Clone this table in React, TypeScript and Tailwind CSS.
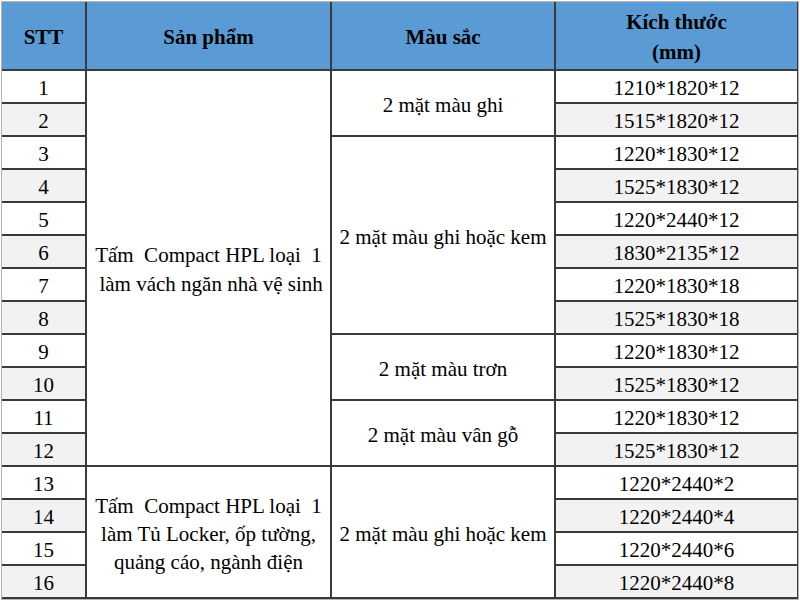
const sizes = [
  '1210*1820*12',
  '1515*1820*12',
  '1220*1830*12',
  '1525*1830*12',
  '1220*2440*12',
  '1830*2135*12',
  '1220*1830*18',
  '1525*1830*18',
  '1220*1830*12',
  '1525*1830*12',
  '1220*1830*12',
  '1525*1830*12',
  '1220*2440*2',
  '1220*2440*4',
  '1220*2440*6',
  '1220*2440*8',
];

// colour groups: [first row, span, label]
const colours: [number, number, string][] = [
  [1, 2, '2 mặt màu ghi'],
  [3, 6, '2 mặt màu ghi hoặc kem'],
  [9, 2, '2 mặt màu trơn'],
  [11, 2, '2 mặt màu vân gỗ'],
  [13, 4, '2 mặt màu ghi hoặc kem'],
];

export default function App() {
  return (
    <div className="w-[800px] h-[600px] bg-white pt-px pl-px font-['Liberation_Serif','Times_New_Roman','DejaVu_Serif',serif]">
      <div className="w-[798px] border border-[#b4b4b4] text-black text-[21px] leading-[29px]">
        <div className="grid grid-cols-[83px_243px_222px_241px] grid-rows-[67px_repeat(16,31px)] gap-[2px] bg-[#3a3a3a] pb-[2px]">
          {/* Header */}
          <div className="bg-[#5b9bd5] font-bold flex items-center justify-center pt-[3px]">STT</div>
          <div className="bg-[#5b9bd5] font-bold flex items-center justify-center pt-[3px]">Sản phẩm</div>
          <div className="bg-[#5b9bd5] font-bold flex items-center justify-center pt-[3px]">Màu sắc</div>
          <div className="bg-[#5b9bd5] font-bold flex flex-col items-center justify-center pt-[3px] leading-[30px]">
            <span>Kích thước</span>
            <span>(mm)</span>
          </div>

          {/* STT + size columns */}
          {sizes.map((s, i) => (
            <div key={'n' + i} className="contents">
              <div
                className={`flex items-center justify-center pt-[4px] ${i % 2 === 1 ? 'bg-[#f2f2f2]' : 'bg-white'}`}
                style={{ gridColumn: 1, gridRow: i + 2 }}
              >
                {i + 1}
              </div>
              <div
                className={`flex items-center justify-center pt-[4px] ${i % 2 === 1 ? 'bg-[#f2f2f2]' : 'bg-white'}`}
                style={{ gridColumn: 4, gridRow: i + 2 }}
              >
                {s}
              </div>
            </div>
          ))}

          {/* Product column */}
          <div
            className="bg-white flex items-center justify-center text-center whitespace-pre pt-[4px]"
            style={{ gridColumn: 2, gridRow: '2 / span 12' }}
          >
            {'Tấm  Compact HPL loại  1\n làm vách ngăn nhà vệ sinh'}
          </div>
          <div
            className="bg-white flex items-center justify-center text-center whitespace-pre pt-[4px] leading-[28px]"
            style={{ gridColumn: 2, gridRow: '14 / span 4' }}
          >
            {'Tấm  Compact HPL loại  1\nlàm Tủ Locker, ốp tường,\nquảng cáo, ngành điện'}
          </div>

          {/* Colour column */}
          {colours.map(([start, span, label], i) => (
            <div
              key={'c' + i}
              className="bg-white flex items-center justify-center text-center pt-[4px]"
              style={{ gridColumn: 3, gridRow: `${start + 1} / span ${span}` }}
            >
              {label}
            </div>
          ))}
        </div>
      </div>
    </div>
  );
}
